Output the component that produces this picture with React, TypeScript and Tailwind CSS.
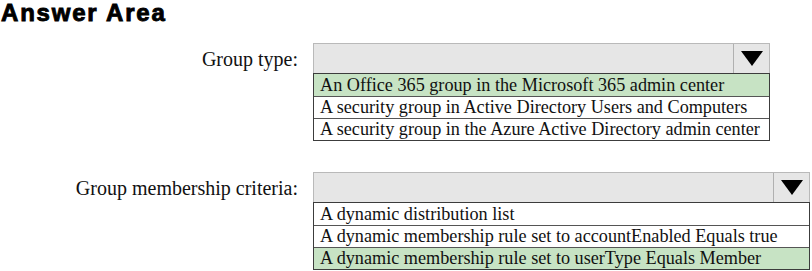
const serif = "font-['Liberation_Serif','Times_New_Roman',serif]";

interface Question {
  label: string;
  width: string;
  options: string[];
  selected: number;
}

const questions: Question[] = [
  {
    label: "Group type:",
    width: "w-[457px]",
    options: [
      "An Office 365 group in the Microsoft 365 admin center",
      "A security group in Active Directory Users and Computers",
      "A security group in the Azure Active Directory admin center",
    ],
    selected: 0,
  },
  {
    label: "Group membership criteria:",
    width: "w-[497px]",
    options: [
      "A dynamic distribution list",
      "A dynamic membership rule set to accountEnabled Equals true",
      "A dynamic membership rule set to userType Equals Member",
    ],
    selected: 2,
  },
];

function Dropdown({ q }: { q: Question }) {
  return (
    <div className={`${q.width} flex flex-col`}>
      {/* select box */}
      <div className="h-[31px] flex border border-[#b9b9b9] bg-[#e6e6e6]">
        <div className="flex-1" />
        <div className="w-[36px] border-l border-[#b0b0b0] flex items-center justify-center">
          <svg width="22" height="15" viewBox="0 0 22 15">
            <polygon points="0,0 22,0 11,15" fill="#000" />
          </svg>
        </div>
      </div>
      {/* option list */}
      <div className="border border-[#3c3c3c] -mt-px">
        {q.options.map((opt, i) => (
          <div
            key={i}
            className={`h-[22px] flex items-center pl-[6px] text-[18.2px] leading-none text-[#111] whitespace-nowrap ${serif} ${
              i > 0 ? "border-t border-[#555]" : ""
            } ${i === q.selected ? "bg-[#c7e3c4]" : "bg-white"}`}
          >
            {opt}
          </div>
        ))}
      </div>
    </div>
  );
}

export default function App() {
  return (
    <div className="w-[812px] h-[271px] bg-white overflow-hidden relative">
      <h1 className="text-[24px] leading-[26px] font-bold tracking-[1.8px] text-black font-['Liberation_Sans',Arial,sans-serif] [-webkit-text-stroke:0.9px_black] pl-[1px]">
        Answer Area
      </h1>

      <div className="flex flex-col gap-[31px] mt-[17px]">
        {questions.map((q, i) => (
          <div key={i} className="flex items-start">
            <div
              className={`w-[300px] h-[31px] flex items-center justify-end pr-[2px] text-[20px] text-[#111] ${serif}`}
            >
              {q.label}
            </div>
            <div className="ml-[13px]">
              <Dropdown q={q} />
            </div>
          </div>
        ))}
      </div>
    </div>
  );
}
